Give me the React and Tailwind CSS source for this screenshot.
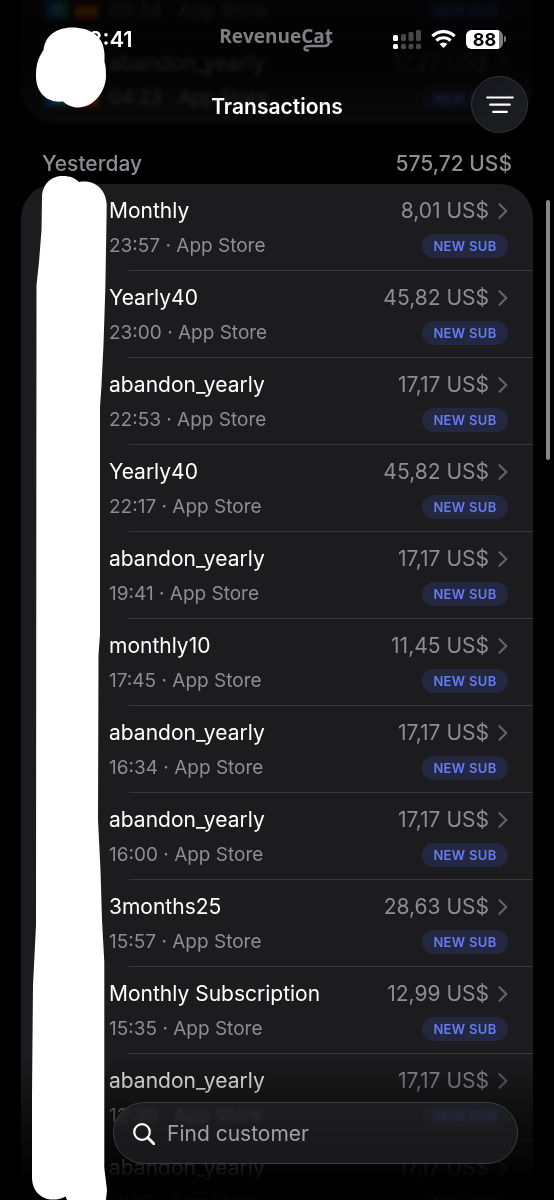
import React from 'react';

const olderTransactions = [
  { product: 'abandon_yearly', time: '09:34', amount: '17,27 US$', badges: true },
  { product: 'abandon_yearly', time: '04:23', amount: '17,27 US$', badges: true },
];

const yesterdayTransactions = [
  { product: 'Monthly', time: '23:57', amount: '8,01 US$' },
  { product: 'Yearly40', time: '23:00', amount: '45,82 US$' },
  { product: 'abandon_yearly', time: '22:53', amount: '17,17 US$' },
  { product: 'Yearly40', time: '22:17', amount: '45,82 US$' },
  { product: 'abandon_yearly', time: '19:41', amount: '17,17 US$' },
  { product: 'monthly10', time: '17:45', amount: '11,45 US$' },
  { product: 'abandon_yearly', time: '16:34', amount: '17,17 US$' },
  { product: 'abandon_yearly', time: '16:00', amount: '17,17 US$' },
  { product: '3months25', time: '15:57', amount: '28,63 US$' },
  { product: 'Monthly Subscription', time: '15:35', amount: '12,99 US$' },
  { product: 'abandon_yearly', time: '12:30', amount: '17,17 US$' },
  { product: 'abandon_yearly', time: '11:26', amount: '17,17 US$' },
];

const Chevron = () => (
  <svg className="w-[10px] h-4 shrink-0" viewBox="0 0 10 16" fill="none" aria-hidden="true">
    <path d="M1.5 1.2 8.3 8l-6.8 6.8" stroke="#636366" strokeWidth="2.2" strokeLinecap="round" strokeLinejoin="round" />
  </svg>
);

// App icon with the store country's flag
const RowBadges = () => (
  <svg className="h-6 w-[54px] shrink-0" viewBox="0 0 54 24" aria-hidden="true">
    <rect x="0" y="0" width="13" height="18" fill="#1769e0" />
    <rect x="11" y="0" width="13" height="18" fill="#1fa85a" />
    <circle cx="12" cy="9" r="6" fill="#5ac8fa" />
    <rect x="29" y="2" width="24" height="17" fill="#d5201c" />
    <rect x="29" y="7" width="24" height="7" fill="#e8b800" />
  </svg>
);

const TransactionRow = ({ item }) => (
  <li className="relative h-[87px] after:absolute after:bottom-0 after:left-[108px] after:right-0 after:h-px after:bg-[#38383a] last:after:hidden">
    <a href="#transaction" className="flex pr-[25px]">
      <div className="flex w-[88px] shrink-0 items-end pl-6">{item.badges && <RowBadges />}</div>
      <div className="flex flex-1 flex-col gap-[7px] pt-[13px]">
        <div className="flex items-center">
          <span className="flex-1 text-[21px] leading-7 text-white">{item.product}</span>
          <span className="mr-[9px] text-[21px] leading-7 text-[#8d8d92]">{item.amount}</span>
          <Chevron />
        </div>
        <div className="flex items-center justify-between">
          <span className="text-[19px] leading-7 text-[#8d8d92]">{item.time} · App Store</span>
          <span className="h-6 w-[86px] rounded-full bg-[#232840] text-center text-[13px] leading-6 font-semibold tracking-wide text-[#667bf5]">
            NEW SUB
          </span>
        </div>
      </div>
    </a>
  </li>
);

const StatusIcons = () => (
  <div className="flex items-center gap-[10px]">
    {/* Dual SIM signal */}
    <svg width="28" height="20" viewBox="0 0 28 20" aria-hidden="true">
      <rect x="0" y="6" width="5" height="6" rx="1.5" fill="#fff" />
      <rect x="8" y="5" width="5" height="7" rx="1.5" fill="#48484a" />
      <rect x="15.500" y="3" width="5" height="9" rx="1.5" fill="#48484a" />
      <rect x="23" y="1" width="5" height="11" rx="1.5" fill="#48484a" />
      <rect x="0" y="15" width="5" height="5" rx="1.5" fill="#fff" />
      <rect x="8" y="15" width="5" height="5" rx="1.5" fill="#48484a" />
      <rect x="15.500" y="15" width="5" height="5" rx="1.5" fill="#48484a" />
      <rect x="23" y="15" width="5" height="5" rx="1.5" fill="#48484a" />
    </svg>
    <svg width="25" height="18" viewBox="0 0 25 18" fill="none" aria-hidden="true">
      <path d="M1.4 6.2a15.6 15.6 0 0 1 22.200 0" stroke="#fff" strokeWidth="3.2" />
      <path d="M5.4 10.6a10.2 10.2 0 0 1 14.2 0" stroke="#fff" strokeWidth="3.1" />
      <path d="M8.6 14a5.6 5.6 0 0 1 7.8 0L12.5 18Z" fill="#fff" />
    </svg>
    <div className="flex items-center gap-px">
      <div className="relative h-[19px] w-[37px] overflow-hidden rounded-md bg-[#7c7c80]">
        <div className="h-full w-[33px] bg-white"></div>
        <span className="absolute inset-0 text-center text-[18px] leading-[19px] font-bold text-black">88</span>
      </div>
      <div className="h-[6px] w-[2px] rounded-r-full bg-[#7c7c80]"></div>
    </div>
  </div>
);

const App = () => {
  return (
    <div className="relative h-screen overflow-hidden bg-black font-['Inter','Liberation_Sans',sans-serif]">
      <main className="px-[21px]">
        <ul className="-mt-[51px] overflow-hidden rounded-b-[34px] bg-[#1c1c1e]">
          {olderTransactions.map((item) => (
            <TransactionRow key={item.time} item={item} />
          ))}
        </ul>

        <div className="flex h-[61px] items-end justify-between px-[21px] pb-[6px] text-[21px] leading-7 font-medium text-[#8d8d92]">
          <h2>Yesterday</h2>
          <span>575,72 US$</span>
        </div>

        <ul className="rounded-[34px] bg-[#1c1c1e]">
          {yesterdayTransactions.map((item) => (
            <TransactionRow key={item.time} item={item} />
          ))}
        </ul>
      </main>

      {/* Header */}
      <header className="absolute inset-x-0 top-0 h-[124px] bg-linear-to-b from-black/85 via-black/90 to-black/65 backdrop-blur-[2px]">
        <div className="flex items-center pt-6 pl-[79px] pr-12">
          <span className="text-[22px] leading-7 font-semibold text-white">18:41</span>
          <div className="relative mb-[6px] ml-auto mr-[60px] font-['Open_Sans',sans-serif] text-[19px] leading-6 font-bold text-[#808084]">
            RevenueCat
            <svg className="absolute right-0 top-2 h-5 w-8" viewBox="0 0 32 20" fill="none" aria-hidden="true">
              <path d="M28 7v3q0 4-5 4H9q-5.500 0-5.500 2.200t3.500 2.200" stroke="#808084" strokeWidth="2.400" strokeLinecap="round" />
            </svg>
          </div>
          <StatusIcons />
        </div>
        <h1 className="pt-[39px] text-center text-[21px] leading-7 font-semibold text-white">Transactions</h1>
        <button
          type="button"
          aria-label="Filter transactions"
          className="absolute right-[26px] top-[76px] flex h-[57px] w-[57px] items-center justify-center rounded-full border border-[#34343c] bg-linear-to-br from-[#12131f] to-[#1b1c1f] to-50%"
        >
          <svg className="h-[18px] w-7" viewBox="0 0 28 18" fill="none" stroke="#fff" strokeWidth="2.200" strokeLinecap="round" aria-hidden="true">
            <path d="M1.200 1.500h25.600M4.200 8.700h19.600M7.200 15.900h13.600" />
          </svg>
        </button>
      </header>

      {/* Bottom fade */}
      <div className="pointer-events-none absolute inset-x-0 bottom-0 h-40 bg-linear-to-b from-transparent from-10% via-black/55 via-50% to-black/95 to-85%"></div>

      {/* Search */}
      <label className="absolute bottom-9 left-[113px] right-9 flex h-[62px] items-center rounded-full border border-[#3c3c40] bg-[#1f1f21]/75 pt-px pl-[19px] backdrop-blur-[2px] backdrop-brightness-150">
        <svg className="h-[22px] w-[22px] shrink-0" viewBox="0 0 22 22" fill="none" stroke="#fff" strokeWidth="2.200" strokeLinecap="round" aria-hidden="true">
          <circle cx="9" cy="9" r="7.800" />
          <path d="m14.800 14.800 6 6" strokeWidth="2.800" />
        </svg>
        <input
          type="text"
          aria-label="Find customer"
          placeholder="Find customer"
          className="ml-3 min-w-0 flex-1 bg-transparent text-[21px] leading-7 text-white outline-none placeholder:text-[#a0a0a5]"
        />
      </label>

      {/* Marker strokes covering the avatars and the clock */}
      <svg className="pointer-events-none absolute left-0 top-0" width="140" height="1200" viewBox="0 0 140 1200" fill="#fff" aria-hidden="true">
        <path d="M43.500 50C45 36 56 27.500 72 27.500C90 27.500 104 36 104.500 54V62C106 67 106 70 106 77C105 93 93 107.500 78 107.500C72 107.500 67 105 63 101.500C47 103 36 93 36 76C36 65 38 58 43.500 50Z" />
        <path d="M42 198C42 184 51 176 63 176C70 176 75 178 79 182C95 179 106.500 190 106.700 205L106.300 232L105.300 290L103.500 345L101.500 385L100 407V634L98.500 655L98 820L100.500 870L102 920L104.300 962V1168L107 1190L106 1200H67L65.500 1196.500C60 1200 55 1199.500 50 1199.500C40 1198 32 1190 32 1178V1095L33 985L36 925L36.500 285L39 262L41.500 230Z" />
      </svg>

      {/* Scroll indicator */}
      <div className="absolute right-1 top-[200px] h-[260px] w-1 rounded-full bg-[#88888a]"></div>
    </div>
  );
};

export default App;
